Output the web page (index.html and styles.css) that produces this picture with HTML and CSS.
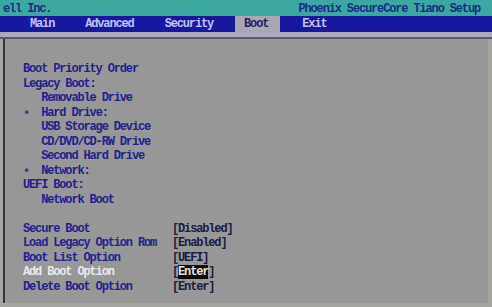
FILE: index.html
```html
<!DOCTYPE html>
<html lang="en">
<head>
    <meta charset="UTF-8">
    <title>Phoenix SecureCore Tiano Setup</title>
    <link rel="stylesheet" href="styles.css">
</head>
<body>
    <div class="screen">
        <div class="title-bar">
            <span class="vendor">ell Inc.</span>
            <span class="product">Phoenix SecureCore Tiano Setup</span>
        </div>
        <div class="menu">
            <span class="tab">Main</span>
            <span class="tab">Advanced</span>
            <span class="tab">Security</span>
            <span class="tab active">Boot</span>
            <span class="tab">Exit</span>
        </div>
        <div class="rule"></div>
        <div class="panel">
            <div class="order">
                <div class="line">Boot Priority Order</div>
                <div class="line">Legacy Boot:</div>
                <div class="line">   Removable Drive</div>
                <div class="line"><span class="bullet">•</span>  Hard Drive:</div>
                <div class="line">   USB Storage Device</div>
                <div class="line">   CD/DVD/CD-RW Drive</div>
                <div class="line">   Second Hard Drive</div>
                <div class="line"><span class="bullet">•</span>  Network:</div>
                <div class="line">UEFI Boot:</div>
                <div class="line">   Network Boot</div>
            </div>
            <div class="settings">
                <div class="label">Secure Boot</div>
                <div class="value">[Disabled]</div>
                <div class="label">Load Legacy Option Rom</div>
                <div class="value">[Enabled]</div>
                <div class="label">Boot List Option</div>
                <div class="value">[UEFI]</div>
                <div class="label selected">Add Boot Option</div>
                <div class="value">[<span class="cursor">Enter</span>]</div>
                <div class="label">Delete Boot Option</div>
                <div class="value">[Enter]</div>
            </div>
        </div>
    </div>
</body>
</html>
```

FILE: styles.css
```css
body {
    margin: 0;
    background-color: #c4d4bc;
    font-family: "Liberation Mono", "DejaVu Sans Mono", monospace;
    font-size: 12px;
    font-weight: bold;
    letter-spacing: -1.15px;
}
.screen {
    width: 492px;
    height: 307px;
    overflow: hidden;
    background-color: #a4a6a0;
}
.title-bar {
    display: flex;
    justify-content: space-between;
    height: 16px;
    padding: 2px 12px 0 3px;
    box-sizing: border-box;
    line-height: 14px;
    background-color: #3ca9a1;
    color: #1c2c8a;
}
.menu {
    display: flex;
    gap: 13px;
    height: 16px;
    padding: 1px 0 0 21px;
    box-sizing: border-box;
    line-height: 15px;
    background-color: #1717a0;
    color: #c4c2ee;
}
.menu .tab {
    padding: 0 9px;
}
.menu .tab.active {
    margin-top: -1px;
    padding: 1px 12px 0 9px;
    background-color: #a9a8b2;
    color: #232060;
}
.rule {
    height: 5px;
    background-color: #aca8c2;
    border-bottom: 2px solid #5c5a66;
}
.panel {
    height: 264px;
    margin: 0 4px 0 3px;
    padding: 23px 0 0 18px;
    box-sizing: border-box;
    border-left: 2px solid #2e3830;
    background-color: #979797;
    color: #22228c;
    line-height: 14.5px;
}
.order {
    margin-bottom: 14.5px;
}
.line {
    white-space: pre;
}
.bullet {
    color: #3a3a9a;
}
.settings {
    display: grid;
    grid-template-columns: 149px auto;
}
.label.selected {
    color: #eaeaee;
}
.value {
    color: #1c1c44;
}
.cursor {
    background-color: #0c0c0c;
    color: #e4e4e4;
}
```
